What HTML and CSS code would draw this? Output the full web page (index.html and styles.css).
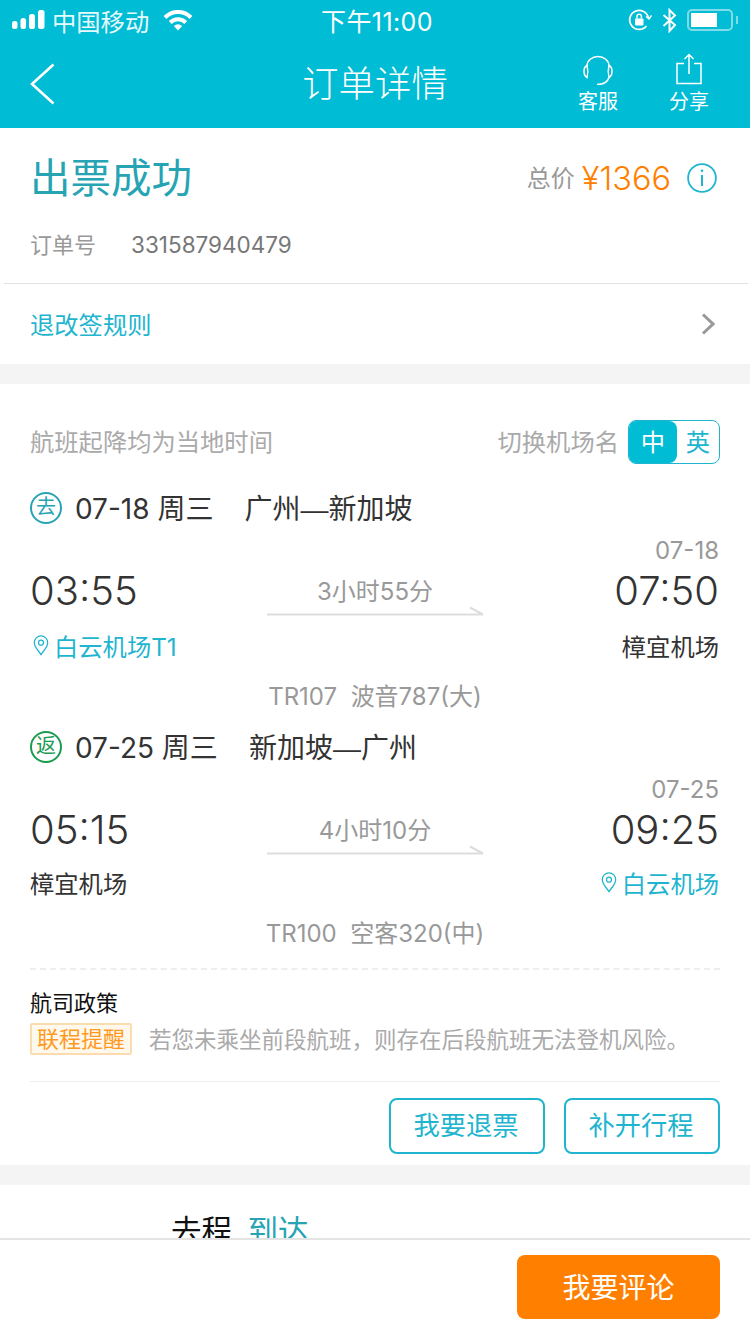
FILE: index.html
```html
<!DOCTYPE html>
<html lang="zh">
<head>
<meta charset="utf-8">
<title>订单详情</title>
<meta name="viewport" content="width=device-width, initial-scale=1">
<link rel="stylesheet" href="styles.css">
</head>
<body>
<header class="top">
    <div class="status">
        <div class="status-left">
            <svg class="signal" width="33" height="20" viewBox="0 0 33 20"><rect x="0" y="11" width="5.5" height="8" rx="2.5"/><rect x="8.5" y="8" width="5.5" height="11" rx="2.5"/><rect x="17" y="4" width="6" height="15" rx="2.5"/><rect x="26" y="0" width="6.5" height="19" rx="2.5"/></svg>
            <span class="carrier">中国移动</span>
            <svg class="wifi" width="30" height="21" viewBox="0 0 30 21"><path d="M2 7.5 A18 18 0 0 1 28 7.5" fill="none" stroke="#fff" stroke-width="4"/><path d="M7.2 12.5 A11 11 0 0 1 22.8 12.5" fill="none" stroke="#fff" stroke-width="4"/><path d="M10.8 16 A6 6 0 0 1 19.2 16 L15 20.5 Z" fill="#fff"/></svg>
        </div>
        <div class="clock">下午11:00</div>
        <div class="status-right">
            <svg width="24" height="24" viewBox="0 0 24 24" fill="none" stroke="#fff" stroke-width="1.8"><path d="M20.5 10 A9.5 9.5 0 1 0 18.5 18"/><path d="M18 8.5 L21 11 L23.5 7.5" stroke-width="1.4"/><rect x="7" y="10.5" width="8.5" height="7" rx="1" fill="#fff" stroke="none"/><path d="M9 10.5 V8.5 a2.2 2.2 0 0 1 4.4 0 V10.5" stroke-width="1.5"/></svg>
            <svg width="15" height="25" viewBox="0 0 15 25" fill="none" stroke="#fff" stroke-width="2"><path d="M1.5 7 L13 17 L7.5 23 V2 L13 7.5 L1.5 18"/></svg>
            <div class="battery"><div class="battery-level"></div></div>
            <div class="battery-tip"></div>
        </div>
    </div>
    <nav class="nav">
        <svg class="back" width="26" height="42" viewBox="0 0 26 42" fill="none" stroke="#fff" stroke-width="2.6"><path d="M23.5 1.5 L2 21 L23.5 40.5"/></svg>
        <h1 class="nav-title">订单详情</h1>
        <div class="nav-actions">
            <div class="nav-action">
                <svg width="32" height="32" viewBox="0 0 32 32" fill="none" stroke="#fff" stroke-width="1.5"><path d="M5 13 A11 9.5 0 0 1 27 13"/><path d="M5 12.5 C1 14 1 22 5 24.5 C6 21 6 16 5 12.5 Z"/><path d="M27 12.5 C31 14 31 22 27 24.5 C26 21 26 16 27 12.5 Z"/><path d="M27 24.5 C25.5 29 21 31.5 15 31.5"/></svg>
                <span>客服</span>
            </div>
            <div class="nav-action">
                <svg width="32" height="32" viewBox="0 0 32 32" fill="none" stroke="#fff" stroke-width="1.5"><path d="M11 10.5 H4 V30.5 H28 V10.5 H21"/><path d="M16 21 V1.5 M11.5 6 L16 1.5 L20.5 6"/></svg>
                <span>分享</span>
            </div>
        </div>
    </nav>
</header>

<section class="card summary">
    <div class="summary-top">
        <div class="result">出票成功</div>
        <div class="price">
            <span class="price-label">总价</span>
            <span class="price-num">¥1366</span>
            <svg width="30" height="30" viewBox="0 0 30 30" fill="none" stroke="#1fb5cf" stroke-width="1.8"><circle cx="15" cy="15" r="13.9"/><path d="M15 12 V23" stroke-width="2"/><circle cx="15" cy="7.8" r="1.3" fill="#1fb5cf" stroke="none"/></svg>
        </div>
    </div>
    <div class="order-no">
        <span class="order-label">订单号</span>
        <span class="order-val">331587940479</span>
    </div>
    <div class="rules">
        <span class="rules-text">退改签规则</span>
        <svg width="14" height="22" viewBox="0 0 14 22" fill="none" stroke="#999" stroke-width="3"><path d="M2 1.5 L12 11 L2 20.5"/></svg>
    </div>
</section>

<section class="card flights">
    <div class="flights-head">
        <span class="head-text">航班起降均为当地时间</span>
        <div class="switch-wrap">
            <span class="head-text">切换机场名</span>
            <div class="switch"><div class="switch-on">中</div><div class="switch-off">英</div></div>
        </div>
    </div>

    <div class="leg">
        <div class="leg-title">
            <span class="tag tag-go">去</span>
            <span class="leg-date">07-18 周三</span>
            <span class="leg-route">广州—新加坡</span>
        </div>
        <div class="arr-date">07-18</div>
        <div class="times">
            <div class="time">03:55</div>
            <div class="duration">
                <span>3小时55分</span>
                <svg width="218" height="11" viewBox="0 0 218 11" fill="none" stroke="#ddd" stroke-width="2"><path d="M1 9.5 H217 L204 2.5"/></svg>
            </div>
            <div class="time time-end">07:50</div>
        </div>
        <div class="airports">
            <div class="airport airport-hl airport-first"><svg width="16" height="21" viewBox="0 0 16 22" fill="none" stroke="#1fb5cf" stroke-width="1.3"><path d="M8 20.5 C5 16 1 12.5 1 8 A7 7 0 0 1 15 8 C15 12.5 11 16 8 20.5 Z"/><circle cx="8" cy="8" r="2.6"/></svg>白云机场T1</div>
            <div class="airport">樟宜机场</div>
        </div>
        <div class="plane">TR107&nbsp;&nbsp;波音787(大)</div>
    </div>

    <div class="leg leg-back">
        <div class="leg-title">
            <span class="tag tag-back">返</span>
            <span class="leg-date">07-25 周三</span>
            <span class="leg-route">新加坡—广州</span>
        </div>
        <div class="arr-date">07-25</div>
        <div class="times">
            <div class="time">05:15</div>
            <div class="duration">
                <span>4小时10分</span>
                <svg width="218" height="11" viewBox="0 0 218 11" fill="none" stroke="#ddd" stroke-width="2"><path d="M1 9.5 H217 L204 2.5"/></svg>
            </div>
            <div class="time time-end">09:25</div>
        </div>
        <div class="airports">
            <div class="airport">樟宜机场</div>
            <div class="airport airport-hl"><svg width="16" height="21" viewBox="0 0 16 22" fill="none" stroke="#1fb5cf" stroke-width="1.3"><path d="M8 20.5 C5 16 1 12.5 1 8 A7 7 0 0 1 15 8 C15 12.5 11 16 8 20.5 Z"/><circle cx="8" cy="8" r="2.6"/></svg>白云机场</div>
        </div>
        <div class="plane">TR100&nbsp;&nbsp;空客320(中)</div>
    </div>

    <div class="policy">
        <div class="policy-title">航司政策</div>
        <div class="policy-row">
            <span class="policy-tag">联程提醒</span>
            <span class="policy-text">若您未乘坐前段航班，则存在后段航班无法登机风险。</span>
        </div>
    </div>
    <div class="actions">
        <div class="btn-line">我要退票</div>
        <div class="btn-line">补开行程</div>
    </div>
</section>

<section class="card extra">
    <span class="extra-a">去程</span>
    <span class="extra-b">到达</span>
</section>

<footer class="bottom">
    <div class="btn-comment">我要评论</div>
</footer>
</body>
</html>
```

FILE: styles.css
```css
html, body
{
    margin: 0;
    height: 1334px;
    overflow: hidden;
}
body
{
    background: #f4f4f4;
    font-family: Inter, "Noto Sans CJK SC", sans-serif;
    color: #333;
}
svg
{
    display: block;
    flex: none;
}

/* top */
.top
{
    background: #00bcd4;
    color: #fff;
    height: 128px;
}
.status
{
    height: 40px;
    display: flex;
    justify-content: space-between;
    align-items: center;
    padding: 0 12px 0 12px;
    position: relative;
}
.status-left
{
    display: flex;
    align-items: center;
    gap: 7px;
}
.signal
{
    fill: #fff;
}
.carrier
{
    font-size: 24.3px;
    color: #e6fafd;
}
.wifi
{
    margin-left: 7px;
}
.clock
{
    position: absolute;
    left: 4px;
    right: 0;
    text-align: center;
    font-size: 25px;
    letter-spacing: 0.4px;
}
.status-right
{
    display: flex;
    align-items: center;
    gap: 10px;
}
.battery
{
    width: 46px;
    height: 22px;
    box-sizing: border-box;
    border: 2px solid #7fdbe8;
    border-radius: 5px;
    padding: 2px;
}
.battery-level
{
    width: 26px;
    height: 14px;
    background: #fff;
}
.battery-tip
{
    width: 2px;
    height: 8px;
    margin-left: -7px;
    background: #7fdbe8;
}
.nav
{
    height: 88px;
    display: flex;
    align-items: center;
    padding: 0 30px;
    position: relative;
}
.nav-title
{
    position: absolute;
    left: 0;
    right: 0;
    margin: -6px 0 0;
    text-align: center;
    font-size: 36.4px;
    font-weight: 300;
}
.nav-actions
{
    margin-left: auto;
    display: flex;
    gap: 51px;
    padding: 0 11px 0 0;
    align-self: flex-start;
    margin-top: 13px;
}
.nav-action
{
    display: flex;
    flex-direction: column;
    align-items: center;
    gap: 4px;
    font-size: 20px;
    line-height: 26px;
}

/* cards */
.card
{
    background: #fff;
    margin-bottom: 20px;
}
.summary
{
    height: 236px;
    padding-left: 4px;
    padding-right: 2px;
    box-sizing: border-box;
}
.summary-top
{
    display: flex;
    justify-content: space-between;
    align-items: center;
    height: 100px;
    padding: 0 31px 0 26px;
}
.result
{
    font-size: 40.5px;
    color: #26a4b4;
    margin-top: -6px;
}
.price
{
    display: flex;
    align-items: center;
}
.price-label
{
    font-size: 24px;
    color: #999;
    margin-right: 7px;
    padding-bottom: 3px;
}
.price-num
{
    font-size: 32.5px;
    color: #ff8000;
    font-weight: 350;
    margin-right: 16px;
}
.order-no
{
    height: 56px;
    display: flex;
    align-items: center;
    padding-left: 26px;
    font-size: 22px;
    box-sizing: border-box;
    border-bottom: 1px solid #e2e2e2;
    padding-bottom: 22px;
}
.order-label
{
    color: #999;
    width: 101px;
    padding-bottom: 4px;
}
.order-val
{
    color: #777;
    font-size: 22.5px;
}
.rules
{
    height: 80px;
    display: flex;
    justify-content: space-between;
    align-items: center;
    padding: 0 33px 0 26px;
    font-size: 24.3px;
    color: #1fb5cf;
}
.rules-text
{
    padding-bottom: 2px;
}

.flights
{
    height: 781px;
    padding: 36px 30px 0;
    box-sizing: border-box;
}
.flights-head
{
    height: 44px;
    display: flex;
    justify-content: space-between;
    align-items: center;
    font-size: 24.3px;
    color: #aaa;
}
.head-text
{
    padding-bottom: 3px;
}
.switch-wrap
{
    display: flex;
    align-items: center;
    gap: 9px;
}
.switch
{
    width: 92px;
    height: 44px;
    box-sizing: border-box;
    border: 1px solid #1fb5cf;
    border-radius: 8px;
    display: flex;
    overflow: hidden;
    color: #1fb5cf;
    line-height: 42px;
    text-align: center;
}
.switch-on
{
    width: 48px;
    background: #00bcd4;
    color: #fff;
    border-radius: 0 8px 8px 0;
}
.switch-off
{
    flex: 1;
}

.leg
{
    margin-top: 26px;
}
.leg-back
{
    margin-top: 18px;
}
.leg-title
{
    display: flex;
    align-items: center;
    height: 34px;
    font-size: 28px;
}
.tag
{
    width: 32px;
    height: 32px;
    box-sizing: border-box;
    border-radius: 50%;
    border: 2px solid #26a4b4;
    color: #26a4b4;
    font-size: 20px;
    line-height: 27px;
    text-align: center;
    margin: 2px 13px 0 0;
}
.tag-back
{
    border-color: #1a9b50;
    color: #1a9b50;
}
.leg-date
{
    margin-right: 31px;
}
.leg-route
{
    font-family: "Liberation Sans", "Noto Sans CJK SC", sans-serif;
}
.arr-date
{
    text-align: right;
    font-size: 24px;
    color: #999;
    line-height: 28px;
    margin-top: 13px;
    padding-right: 1px;
}
.times
{
    display: grid;
    grid-template-columns: 1fr auto 1fr;
    align-items: start;
    height: 52px;
}
.time
{
    font-size: 40px;
    font-weight: 350;
    line-height: 51px;
}
.time-end
{
    text-align: right;
    padding-right: 1px;
}
.duration
{
    display: flex;
    flex-direction: column;
    align-items: center;
    font-size: 24px;
    line-height: 27px;
    color: #999;
    padding-top: 13px;
}
.airports
{
    display: flex;
    justify-content: space-between;
    align-items: center;
    height: 36px;
    margin-top: 10px;
    font-size: 24.3px;
    padding-right: 1px;
}
.leg-back .airports
{
    margin-top: 8px;
}
.airport
{
    display: flex;
    align-items: center;
    gap: 5px;
}
.airport-first
{
    margin-left: 3px;
}
.airport-hl
{
    color: #1fb5cf;
}
.plane
{
    text-align: center;
    font-size: 24px;
    color: #999;
    line-height: 28px;
    margin-top: 20px;
}

.policy
{
    margin-top: 20px;
    border-top: 2px dashed #eee;
    height: 113px;
    box-sizing: border-box;
    padding-top: 19px;
}
.policy-title
{
    font-size: 22px;
    line-height: 28px;
    color: #111;
}
.policy-row
{
    display: flex;
    align-items: center;
    margin-top: 5px;
}
.policy-tag
{
    box-sizing: border-box;
    width: 102px;
    height: 32px;
    line-height: 29px;
    text-align: center;
    font-size: 22px;
    color: #ff9a1f;
    background: #fff8ec;
    border: 2px solid #fbdcb0;
    border-radius: 2px;
}
.policy-text
{
    margin-left: 17px;
    font-size: 22.5px;
    color: #aaa;
    padding-bottom: 2px;
}
.actions
{
    border-top: 1px solid #eee;
    display: flex;
    justify-content: flex-end;
    gap: 19px;
    padding-top: 16px;
}
.btn-line
{
    width: 156px;
    height: 56px;
    box-sizing: border-box;
    border: 2px solid #1fb5cf;
    border-radius: 8px;
    padding-right: 2px;
    color: #1fb5cf;
    font-size: 26.3px;
    line-height: 52px;
    text-align: center;
}

.extra
{
    height: 149px;
    box-sizing: border-box;
    padding: 22px 0 0 171px;
    font-size: 30.5px;
    margin: 0;
}
.extra-a
{
    color: #111;
    margin-right: 7px;
}
.extra-b
{
    color: #26a4b4;
}

.bottom
{
    position: fixed;
    left: 0;
    right: 0;
    bottom: 0;
    height: 96px;
    box-sizing: border-box;
    background: #fff;
    border-top: 2px solid #e4e4e4;
    display: flex;
    justify-content: flex-end;
    padding: 15px 30px 0 0;
}
.btn-comment
{
    width: 203px;
    height: 64px;
    background: #ff8000;
    border-radius: 8px;
    color: #fff;
    font-size: 28px;
    line-height: 67px;
    text-align: center;
}
```
